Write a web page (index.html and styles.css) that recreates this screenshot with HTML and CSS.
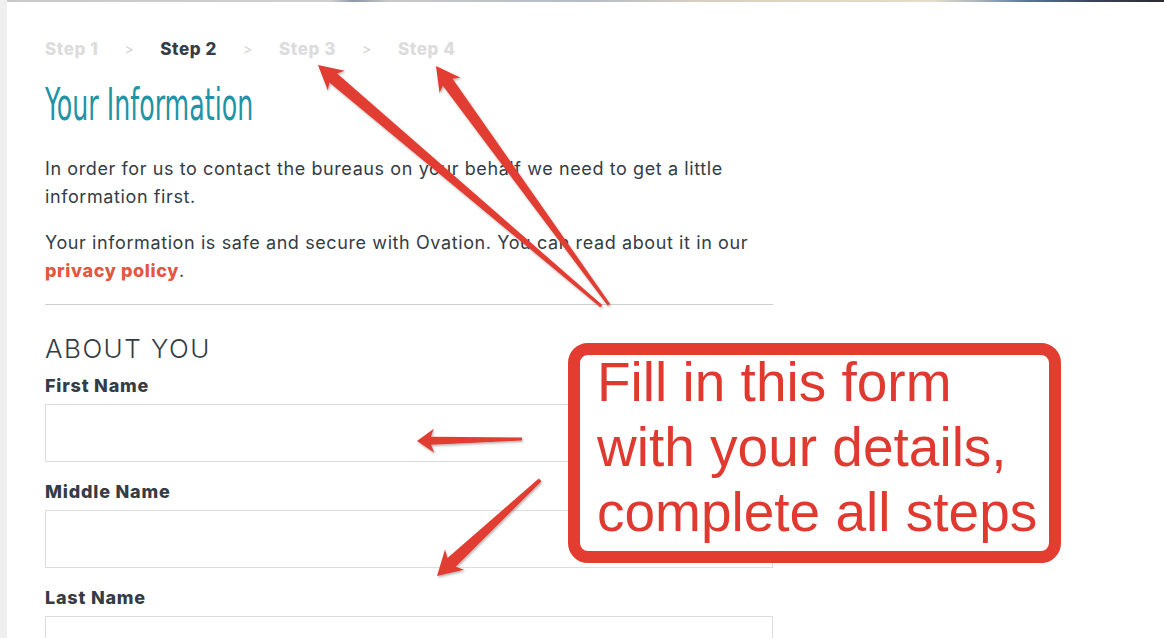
FILE: index.html
```html
<!DOCTYPE html>
<html lang="en">
<head>
    <meta charset="UTF-8">
    <meta name="viewport" content="width=device-width, initial-scale=1.0">
    <title>Your Information</title>
    <link rel="stylesheet" href="styles.css">
</head>
<body>
    <div class="page">
        <div class="rail"></div>
        <div class="main">
            <div class="strip"></div>
            <div class="content">
                <ol class="steps">
                    <li>Step 1</li>
                    <li class="sep">&gt;</li>
                    <li class="current">Step 2</li>
                    <li class="sep">&gt;</li>
                    <li>Step 3</li>
                    <li class="sep">&gt;</li>
                    <li>Step 4</li>
                </ol>

                <h1><span>Your Information</span></h1>

                <p>In order for us to contact the bureaus on your behalf we need to get a little information first.</p>
                <p>Your information is safe and secure with Ovation. You can read about it in our <a href="#">privacy policy</a>.</p>

                <hr>

                <h2>About you</h2>

                <div class="field">
                    <label for="first">First Name</label>
                    <input id="first" type="text">
                </div>
                <div class="field">
                    <label for="middle">Middle Name</label>
                    <input id="middle" type="text">
                </div>
                <div class="field">
                    <label for="last">Last Name</label>
                    <input id="last" type="text">
                </div>
            </div>
        </div>
    </div>

    <!-- annotation layer -->
    <svg class="arrows" width="1164" height="638" viewBox="0 0 1164 638">
        <defs>
            <filter id="shade" x="-10%" y="-10%" width="120%" height="120%">
                <feDropShadow dx="1" dy="1.5" stdDeviation="0.8" flood-color="#000" flood-opacity="0.3"/>
            </filter>
        </defs>
        <g fill="#e23d31" filter="url(#shade)">
            <polygon transform="translate(318 65) rotate(40.4)" points="0,0 24,-13 20,-6 372,-1.5 372,1.5 20,6 24,13"/>
            <polygon transform="translate(436 66) rotate(54.1)" points="0,0 24,-13 20,-6 295,-1.5 295,1.5 20,6 24,13"/>
            <polygon transform="translate(417 441) rotate(-1.1)" points="0,0 17,-12 14,-4 105,-1.5 105,1.5 14,4 17,12"/>
            <polygon transform="translate(437 576) rotate(-43)" points="0,0 24,-14 20,-6 141,-2 141,2 20,6 24,14"/>
        </g>
    </svg>

    <div class="callout">
        <p>Fill in this form<br>with your details,<br>complete all steps</p>
    </div>
</body>
</html>
```

FILE: styles.css
```css
html, body {
    margin: 0;
    padding: 0;
    overflow: hidden;
    background-color: #fff;
}
body {
    font-family: Inter, "Noto Sans", sans-serif;
    color: #343c45;
}
.page {
    display: flex;
    min-height: 638px;
}
.rail {
    width: 7px;
    flex-shrink: 0;
    background-color: #efefef;
}
.main {
    flex: 1;
}
.strip {
    height: 2px;
    background: linear-gradient(to right, #c9c9c9 0%, #cfcfcf 28%, #8d97a8 30%, #c9c9c9 33%, #b4bcc6 50%, #d9cfc0 60%, #e6dccb 80%, #a9b3bd 84%, #5a7897 88%, #3a4357 94%, #2a2a30 100%);
}
.content {
    width: 728px;
    padding: 37px 0 0 38px;
}
.steps {
    list-style: none;
    margin: 0;
    padding: 0;
    display: flex;
    gap: 26px;
    font-size: 17px;
    line-height: 20px;
    font-weight: 800;
    letter-spacing: 0.6px;
    color: #dcdcdc;
}
.steps .current {
    color: #363d44;
}
.steps .sep {
    font-weight: 400;
    font-size: 14px;
    color: #d4d4d4;
}
h1 {
    margin: 24px 0 0;
    font-family: "DejaVu Sans Condensed", "DejaVu Sans", sans-serif;
    font-weight: normal;
    font-size: 44px;
    line-height: 44px;
    color: #2094a5;
    white-space: nowrap;
}
h1 span {
    display: inline-block;
    transform: scaleX(0.64);
    transform-origin: left center;
}
p {
    margin: 0 0 18px;
    font-size: 18px;
    line-height: 28px;
    letter-spacing: 0.6px;
}
h1 + p {
    margin-top: 28px;
}
a {
    color: #e4573f;
    font-weight: 800;
    text-decoration: none;
}
hr {
    margin: 19px 0 0;
    border: none;
    border-top: 1px solid #cfcfcf;
}
h2 {
    margin: 28px 0 10px;
    font-size: 26px;
    line-height: 32px;
    font-weight: 300;
    letter-spacing: 1.5px;
    text-transform: uppercase;
    color: #343c45;
}
.field {
    margin-bottom: 19px;
}
.field label {
    display: block;
    font-size: 18px;
    line-height: 22px;
    font-weight: 800;
    letter-spacing: 0.8px;
    margin-bottom: 7px;
}
.field input {
    display: block;
    box-sizing: border-box;
    width: 728px;
    height: 58px;
    border: 1px solid #dcdcdc;
    border-radius: 0;
    background: #fff;
    font-size: 17px;
}
.arrows {
    position: absolute;
    top: 0;
    left: 0;
    pointer-events: none;
}
.callout {
    position: absolute;
    left: 568px;
    top: 343px;
    width: 493px;
    height: 220px;
    box-sizing: border-box;
    border: 12px solid #e33c30;
    border-radius: 20px;
    background-color: rgba(255, 255, 255, 0.95);
    padding-left: 17px;
}
.callout p {
    margin: -5px 0 0;
    font-family: "Liberation Sans", Arial, sans-serif;
    font-size: 55px;
    line-height: 65px;
    letter-spacing: 0;
    color: #e03a30;
    white-space: nowrap;
}
```
